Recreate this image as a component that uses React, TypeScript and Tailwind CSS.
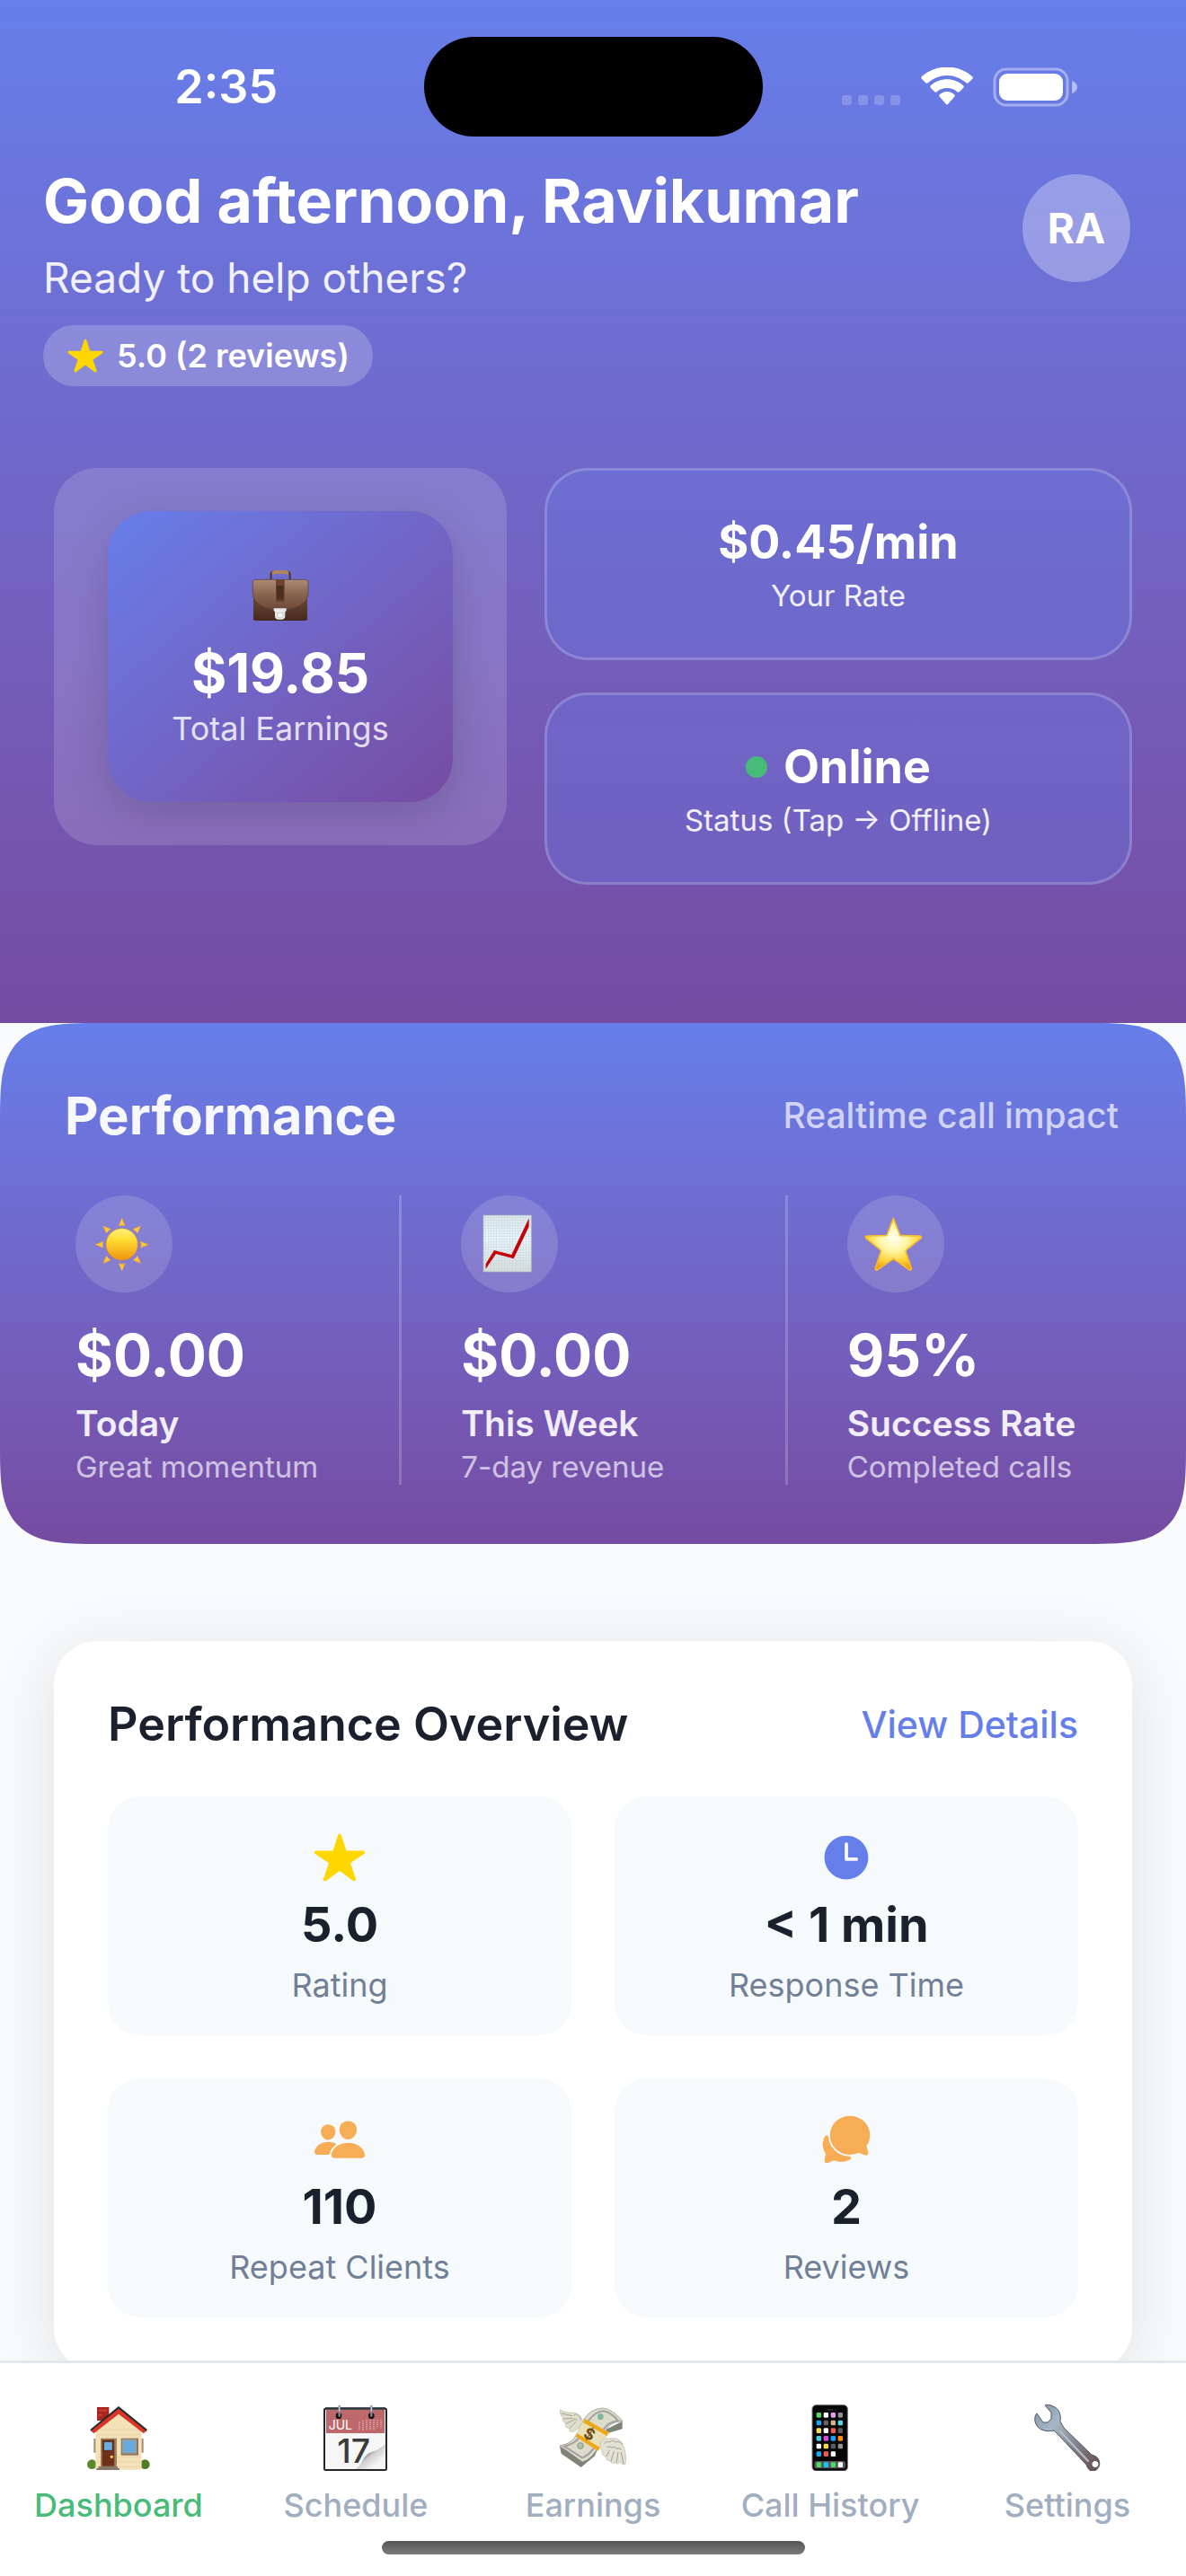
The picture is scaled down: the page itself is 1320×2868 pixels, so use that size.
import { useState } from 'react';
import { IoChatbubbles, IoPeople, IoStar, IoTime } from 'react-icons/io5';

function BriefcaseIcon() {
  return (
    <svg viewBox="110 92 204 204" className="size-[68px]" aria-hidden="true">
      <defs>
        <linearGradient id="bag-flap" x1="0" y1="0" x2="0" y2="1">
          <stop offset="0" stopColor="#a98c76" />
          <stop offset="0.45" stopColor="#8b6750" />
          <stop offset="1" stopColor="#6a4738" />
        </linearGradient>
        <linearGradient id="bag-body" x1="0" y1="0" x2="0" y2="1">
          <stop offset="0" stopColor="#7c5947" />
          <stop offset="1" stopColor="#46291f" />
        </linearGradient>
      </defs>
      <path d="M181 141v-14q-3-12 10-13h42q13 1 11 13v14" fill="none" stroke="#4d3122" strokeWidth="6" />
      <path d="M183 118q2-8 12-8h35q9 0 11 8-2 6-8 5-20-3-42 0-7 1-8-5z" fill="#b5855a" />
      <path d="M122 160h180v112q0 6-6 6H128q-6 0-6-6z" fill="url(#bag-body)" />
      <path d="M120 150q0-9 9-9h167q9 0 9 9v36c-2 38-44 57-93 57s-91-19-92-57z" fill="url(#bag-flap)" stroke="#583a2c" strokeWidth="2" />
      <path d="M197 140h29v76h-29z" fill="#6b432f" />
      <path d="M200 160h23v48h-23z" fill="#4d2f21" />
      <path d="M190 237h42v8l-4 3v17q-2 9-12 9h-10q-10 0-12-9v-17l-4-3z" fill="#e9e9e9" />
      <path d="M202 253h19v11q-2 4-5 4h-9q-4 0-5-4z" fill="#f8f8f8" stroke="#b4b4b4" strokeWidth="2" />
    </svg>
  );
}

const SUN_RAYS = [0, 45, 90, 135, 180, 225, 270, 315];

function SunIcon() {
  return (
    <svg viewBox="0 0 324 324" className="size-full" aria-hidden="true">
      <defs>
        <linearGradient id="sun-fill" x1="0" y1="0" x2="0" y2="1">
          <stop offset="0" stopColor="#fff07a" />
          <stop offset="0.35" stopColor="#ffdd33" />
          <stop offset="1" stopColor="#f09410" />
        </linearGradient>
      </defs>
      {SUN_RAYS.map((angle) => (
        <path key={angle} d="M155 76l10 25q-10-3-20 0z" fill="#ffcb35" stroke="#eca536" strokeWidth="2" transform={`rotate(${angle} 155 164)`} />
      ))}
      <circle cx="155" cy="163" r="53" fill="url(#sun-fill)" stroke="#e08a26" strokeWidth="2" />
    </svg>
  );
}

function ChartIcon() {
  return (
    <svg viewBox="0 0 324 324" className="size-full" aria-hidden="true">
      <defs>
        <linearGradient id="chart-paper" x1="0" y1="0" x2="0" y2="1">
          <stop offset="0" stopColor="#dce6ea" />
          <stop offset="0.4" stopColor="#e9f5fc" />
          <stop offset="1" stopColor="#d9dedb" />
        </linearGradient>
        <pattern id="chart-grid" width="9" height="9" patternUnits="userSpaceOnUse">
          <path d="M0 0h9M0 0v9" stroke="#bccfd8" strokeWidth="2" />
        </pattern>
      </defs>
      <path d="M75 66h160v189H75z" fill="url(#chart-paper)" />
      <path d="M75 66h160v189H75z" fill="url(#chart-grid)" stroke="#aab6b8" strokeWidth="2" />
      <path d="M83 228v17l34-50 59 16 51-107V76l-58 122-58-15z" fill="#c20006" />
    </svg>
  );
}

function GlossyStarIcon() {
  return (
    <svg viewBox="0 0 324 324" className="size-full" aria-hidden="true">
      <defs>
        <radialGradient id="star-fill" cx="0.5" cy="0.38" r="0.62">
          <stop offset="0" stopColor="#fffef0" />
          <stop offset="0.4" stopColor="#fff6a8" />
          <stop offset="0.75" stopColor="#ffd338" />
          <stop offset="1" stopColor="#f0a010" />
        </radialGradient>
      </defs>
      <path
        d="M154 76l21 55q1 3 5 3l62 1q9 1 3 8l-47 38q-4 3-2 8l18 54q1 9-7 5l-49-34q-4-3-8 0l-49 34q-8 4-7-5l18-54q2-5-2-8l-47-38q-6-7 3-8l62-1q4 0 5-3l21-55z"
        fill="url(#star-fill)"
        stroke="#f7bb2c"
        strokeWidth="5"
        strokeLinejoin="round"
      />
    </svg>
  );
}

function HouseIcon() {
  return (
    <svg viewBox="44 36 222 222" className="size-[74px]" aria-hidden="true">
      <path d="M83 45h40v45H83z" fill="#a9251f" />
      <path d="M90 52h26v8H90zM86 68h16v7H86z" fill="#c43b32" />
      <circle cx="66" cy="236" r="16" fill="#5c8b2d" />
      <circle cx="243" cy="236" r="16" fill="#4f7d26" />
      <path d="M72 150h8v47h-8zM230 150h8v47h-8z" fill="#a88c72" />
      <path d="M78 120l78-66 76 66v134H78z" fill="#f5e1b8" />
      <path d="M90 120h130M84 137h144M84 212h144M84 228h144M84 244h144" stroke="#e3cc9e" strokeWidth="2" />
      <path d="M60 120l95-78 96 78-6 8-90-74-89 74z" fill="#232b2b" />
      <path d="M64 124l91-74 91 74-7 9-84-65-83 65z" fill="#dc3429" />
      <path d="M95 149h54v97H95z" fill="#a18463" />
      <path d="M100 154h41v88h-41z" fill="#70301c" />
      <path d="M105 160h30v30h-30z" fill="#66afdc" stroke="#5a2314" strokeWidth="3" />
      <circle cx="132" cy="211" r="5" fill="#ffd34c" />
      <path d="M163 149h58v57h-58z" fill="#8b7765" />
      <path d="M168 154h45v44h-45z" fill="#68aadb" stroke="#b09a83" strokeWidth="3" />
      <path d="M88 243h64v6h6v6H81v-6h7z" fill="#85776b" />
    </svg>
  );
}

function CalendarIcon() {
  return (
    <svg viewBox="837 36 222 222" className="size-[74px]" aria-hidden="true">
      <defs>
        <linearGradient id="page-curl" x1="0" y1="0" x2="1" y2="1">
          <stop offset="0.3" stopColor="#555" />
          <stop offset="0.5" stopColor="#cfcfcf" />
          <stop offset="0.75" stopColor="#f4f4f4" />
        </linearGradient>
      </defs>
      <rect x="843" y="50" width="207" height="205" rx="4" fill="#f6f6f6" stroke="#23272b" strokeWidth="6" />
      <path d="M849 54h195v78H849z" fill="#bd686a" />
      <path d="M846 49h201" stroke="#2c3338" strokeWidth="6" />
      <text x="857" y="121" fontFamily="Inter, sans-serif" fontSize="42" fill="#fff">JUL</text>
      <path
        d="M960 94v28M972 90v32M984 88v32M996 87v34M1008 87v32M1020 87v28M1032 87v28"
        stroke="#dda9a8"
        strokeWidth="5"
        strokeDasharray="4 3"
      />
      <circle cx="891" cy="74" r="10" fill="#141414" />
      <circle cx="1000" cy="74" r="10" fill="#141414" />
      <path d="M893 42v32M1000 42v32" stroke="#7b8a98" strokeWidth="7" strokeLinecap="round" />
      <path d="M893 44v14M1000 44v14" stroke="#dbe4ec" strokeWidth="3" strokeLinecap="round" />
      <text x="886" y="231" fontFamily="Inter, sans-serif" fontSize="112" fontWeight="500" fill="#3b3b3b">17</text>
      <path d="M946 252c26-12 24-46 52-56 22-8 34-14 48-28v84z" fill="url(#page-curl)" />
    </svg>
  );
}

function MoneyIcon() {
  return (
    <svg viewBox="39 36 222 222" className="size-[74px]" aria-hidden="true">
      <path d="M39 176l5 24 66 46 46-38 30-72 62-18V92l-60 30-40 66-38 30z" fill="#7f8478" />
      <path d="M39 174c34-8 46-16 62-50 16-40 34-72 80-76 26 2 48 20 68 44-36 2-50 14-62 44-16 40-34 80-72 92z" fill="#dcdccb" stroke="#8a8a7d" strokeWidth="2" />
      <path d="M54 176c34-8 48-22 62-50 16-34 34-64 68-68 20 2 34 14 50 32-34 6-48 22-58 48-14 34-34 66-62 76z" fill="none" stroke="#a79fa2" strokeWidth="6" />
      <circle cx="175" cy="77" r="10" fill="#7eb49a" />
      <circle cx="108" cy="174" r="10" fill="#b6bca9" stroke="#8d9582" strokeWidth="3" />
      <path d="M121 85l82 44-36 62-74-54z" fill="#e9dfb8" />
      <path d="M123 84l80 46-6 11-80-45zM97 133l76 47-7 11-73-48z" fill="#eda813" />
      <text x="138" y="153" textAnchor="middle" transform="rotate(28 138 136)" fontFamily="Inter, sans-serif" fontSize="52" fontWeight="700" fill="#6a4a12">$</text>
      <path d="M116 96c-4-24-20-34-42-32-14-2-26-4-35-11 0 14 4 22 12 28-4 8 0 14 8 18-4 10 2 16 12 16-2 10 4 14 14 12 12-6 20-16 31-31z" fill="#dfddce" stroke="#b9b6a4" strokeWidth="2" />
      <path d="M44 66l36 8M52 84l30-2M60 100l26-12M72 116l20-22M86 72q10-8 16 2 8 4 6 14M84 86q8-6 12 4" fill="none" stroke="#aaa696" strokeWidth="3" />
      <path d="M176 160c10-12 20-10 30-10 22-4 38 4 44 22 10 20 10 42 8 64-10 2-14-2-18-10-4 10-10 10-16 4-6 4-14 2-16-6-10 2-14-4-14-12-10-4-14-10-14-20-6-10-8-20-4-32z" fill="#e3e1d4" stroke="#b9b6a4" strokeWidth="2" />
      <path d="M206 188l-12 22M220 192l-10 34M234 196l-6 34M244 196l8 38M188 166q8-10 18-4 8-10 20 0 12-6 22 8M196 180q8-8 16 0 10-6 16 4 8-6 18 4" fill="none" stroke="#a39f90" strokeWidth="3" />
    </svg>
  );
}

const APP_ROWS = [
  ['#4cd964', '#ffffff', '#e29cf0', '#8e8e93'],
  ['#18a9f5', '#636366', '#d5b48c', '#4fd8e8'],
  ['#fbdc45', '#ffffff', '#f7584f', '#5c5c60'],
  ['#45cfe0', '#d94be0', '#12a5ff', '#ff8f00'],
  ['#ffffff', '#fbdc45', '#5c5c60', '#8e8e93'],
  ['#18a9f5', '#f25a55', '#ffffff'],
];
const DOCK = ['#4cd964', '#18c3f5', '#4cd964', '#ffffff'];

function PhoneIcon() {
  return (
    <svg viewBox="831 36 222 222" className="size-[74px]" aria-hidden="true">
      <rect x="882" y="38" width="118" height="220" rx="13" fill="#050505" stroke="#77777b" strokeWidth="3" />
      <path d="M932 54h20M957 54h5" stroke="#303034" strokeWidth="5" />
      {APP_ROWS.map((row, r) =>
        row.map((color, c) => (
          <rect key={`${r}-${c}`} x={896 + c * 24} y={63 + r * 26} width="16" height="17" rx="4" fill={color} />
        ))
      )}
      <rect x="889" y="225" width="104" height="25" rx="8" fill="#55555a" />
      {DOCK.map((color, c) => (
        <rect key={c} x={896 + c * 24} y="229" width="16" height="17" rx="4" fill={color} />
      ))}
    </svg>
  );
}

function WrenchIcon() {
  return (
    <svg viewBox="0 0 74 74" className="size-[74px]" aria-hidden="true">
      <defs>
        <linearGradient id="wrench-steel" x1="0" y1="0" x2="1" y2="1">
          <stop offset="0" stopColor="#8093a5" />
          <stop offset="0.3" stopColor="#a5b7c8" />
          <stop offset="0.6" stopColor="#83858e" />
          <stop offset="1" stopColor="#65484a" />
        </linearGradient>
      </defs>
      <path
        fillRule="evenodd"
        d="M12 1l7 8 0 7-4 4-5 0-7-10C-1 14 0 24 8 28c5 2 9 2 14 1l6 6 30 32c2 6 5 8 9 7 5-2 7-7 5-12-1-3-4-5-8-6L33 26l-4-7c1-8-1-14-8-17-4-2-7-2-9-1zM66 63a4 4 0 1 1 0 7 4 4 0 0 1 0-7z"
        fill="url(#wrench-steel)"
        stroke="#55565f"
        strokeWidth="1"
        strokeLinejoin="round"
      />
      <path d="M29 30l31 33" stroke="#b5bfca" strokeWidth="2" strokeLinecap="round" />
    </svg>
  );
}

function StatusBar() {
  return (
    <div className="grid grid-cols-[1fr_377px_1fr] items-center pt-[41px]">
      <div className="flex justify-center pl-8 text-[52px] leading-[64px] font-semibold">2:35</div>
      <div className="h-[111px] rounded-full bg-black" />
      <div className="flex items-center justify-center pr-8">
        <svg viewBox="0 0 262 44" className="h-11 w-[262px]" fill="#fff" aria-hidden="true">
          <g fillOpacity="0.2">
            <rect x="0" y="31" width="11" height="11" rx="3" />
            <rect x="18" y="31" width="11" height="11" rx="3" />
            <rect x="36" y="31" width="11" height="11" rx="3" />
            <rect x="54" y="31" width="11" height="11" rx="3" />
          </g>
          <path d="M117 9c8 0 15 3 21 8 1 1 2 1 3 0l4-4c1-1 1-2 0-3-16-14-40-14-56 0-1 1-1 2 0 3l4 4c1 1 2 1 3 0 6-5 13-8 21-8z" />
          <path d="M117 23c4 0 8 1 11 4 1 1 2 1 3 0l4-4c1-1 1-2 0-3-10-9-26-9-36 0-1 1-1 2 0 3l4 4c1 1 2 1 3 0 3-3 7-4 11-4z" />
          <path d="M125 33c1-1 1-2 0-3-5-4-11-4-16 0-1 1-1 2 0 3l7 8c1 1 1 1 2 0z" />
          <rect x="170" y="2" width="81" height="40" rx="13" fill="none" stroke="#fff" strokeOpacity="0.4" strokeWidth="3" />
          <rect x="175" y="7" width="71" height="30" rx="9" />
          <path d="M256 15q6 2 6 7t-6 7z" fillOpacity="0.5" />
        </svg>
      </div>
    </div>
  );
}

function Header() {
  const [online, setOnline] = useState(true);

  return (
    <header className="bg-linear-to-b from-[#667eea] to-[#764ba2] pb-[154px] text-white">
      <StatusBar />

      <div className="mt-7 flex items-start justify-between pr-[62px] pl-12">
        <div>
          <h1 className="text-[68px] leading-[86px] font-bold">Good afternoon, Ravikumar</h1>
          <p className="mt-3.5 text-[46px] leading-[58px] text-white/90">Ready to help others?</p>
          <div className="mt-6 inline-flex h-[68px] items-center gap-3.5 rounded-full bg-white/20 px-[26px]">
            <IoStar className="size-[42px] text-[#ffd700]" />
            <span className="text-[36px] leading-[44px] font-semibold">5.0 (2 reviews)</span>
          </div>
        </div>
        <button className="mt-3.5 size-[120px] rounded-full bg-white/30 text-[46px] font-bold">RA</button>
      </div>

      <div className="mx-[60px] mt-[91px] grid grid-cols-[504fr_654fr] items-start gap-[42px]">
        <div className="rounded-[48px] bg-white/15 px-[60px] py-12">
          <div className="flex flex-col items-center rounded-[48px] bg-linear-to-br from-[#667eea] to-[#764ba2] py-[60px] shadow-[0_12px_48px_rgba(0,0,0,0.15)]">
            <BriefcaseIcon />
            <div className="mt-4 text-[60px] leading-[72px] font-bold">$19.85</div>
            <div className="mt-1 text-[36px] leading-[44px] text-white/80">Total Earnings</div>
          </div>
        </div>

        <div className="flex flex-col gap-9">
          <div className="flex flex-col items-center rounded-[48px] border-3 border-white/20 bg-[#667eea]/30 py-12">
            <div className="text-[52px] leading-[64px] font-bold">$0.45/min</div>
            <div className="mt-1.5 text-[33px] leading-[42px] text-white/90">Your Rate</div>
          </div>
          <button
            onClick={() => setOnline(!online)}
            className="flex flex-col items-center rounded-[48px] border-3 border-white/20 bg-[#667eea]/30 py-12"
          >
            <span className="flex items-center gap-[18px] text-[52px] leading-[64px] font-bold">
              <span className={online ? 'size-6 rounded-full bg-[#48bb78]' : 'size-6 rounded-full bg-[#a0aec0]'} />
              {online ? 'Online' : 'Offline'}
            </span>
            <span className="mt-1.5 text-[33px] leading-[42px] text-white/90">
              Status (Tap → {online ? 'Offline' : 'Online'})
            </span>
          </button>
        </div>
      </div>
    </header>
  );
}

interface MetricProps {
  icon: React.ReactNode;
  value: string;
  label: string;
  note: string;
}

function Metric({ icon, value, label, note }: MetricProps) {
  return (
    <div className="border-r-3 border-white/20 last:border-r-0">
      <div className="size-[108px] rounded-full bg-white/15">{icon}</div>
      <div className="mt-[30px] text-[64px] leading-[80px] font-bold">{value}</div>
      <div className="mt-3 text-[39px] leading-[48px] font-semibold whitespace-nowrap text-white/90">{label}</div>
      <div className="mt-1 text-[33px] leading-[40px] whitespace-nowrap text-white/65">{note}</div>
    </div>
  );
}

function PerformanceBanner() {
  return (
    <section className="rounded-[72px] bg-linear-to-b from-[#667eea] to-[#764ba2] pt-[67px] pr-[75px] pb-[66px] pl-[72px] text-white supports-[corner-shape:squircle]:rounded-[110px] supports-[corner-shape:squircle]:[corner-shape:superellipse(1.75)]">
      <div className="flex items-center justify-between">
        <h2 className="text-[58px] leading-[72px] font-bold text-white/95">Performance</h2>
        <span className="text-[39px] leading-[48px] font-medium text-white/70">Realtime call impact</span>
      </div>
      <div className="mt-[53px] mr-2 ml-3 grid grid-cols-[363fr_363fr_294fr] gap-[66px]">
        <Metric icon={<SunIcon />} value="$0.00" label="Today" note="Great momentum" />
        <Metric icon={<ChartIcon />} value="$0.00" label="This Week" note="7-day revenue" />
        <Metric icon={<GlossyStarIcon />} value="95%" label="Success Rate" note="Completed calls" />
      </div>
    </section>
  );
}

interface TileProps {
  icon: React.ReactNode;
  value: string;
  label: string;
}

function Tile({ icon, value, label }: TileProps) {
  return (
    <div className="flex flex-col items-center rounded-[36px] bg-[#f7fafc] px-9 pt-[38px] pb-[34px]">
      {icon}
      <div className="mt-3 text-[54px] leading-[66px] font-bold text-[#1a202c]">{value}</div>
      <div className="mt-3 text-[36px] leading-[44px] text-[#718096]">{label}</div>
    </div>
  );
}

function Overview() {
  return (
    <section className="mx-[60px] mt-[108px] rounded-[48px] bg-white p-[60px] shadow-[0_12px_72px_rgba(0,0,0,0.1)]">
      <div className="flex items-center justify-between">
        <h2 className="text-[52px] leading-[66px] font-semibold text-[#1a202c]">Performance Overview</h2>
        <a href="#details" className="text-[41px] leading-[50px] font-medium text-[#667eea]">View Details</a>
      </div>
      <div className="mt-[47px] grid grid-cols-2 gap-12">
        <Tile icon={<IoStar className="size-[60px] text-[#ffd700]" />} value="5.0" label="Rating" />
        <Tile icon={<IoTime className="size-[60px] text-[#667eea]" />} value="< 1 min" label="Response Time" />
        <Tile icon={<IoPeople className="size-[60px] text-[#f6ad55]" />} value="110" label="Repeat Clients" />
        <Tile icon={<IoChatbubbles className="size-[60px] text-[#f6ad55]" />} value="2" label="Reviews" />
      </div>
    </section>
  );
}

const TABS = [
  { name: 'Dashboard', href: '#dashboard', icon: <HouseIcon />, active: true },
  { name: 'Schedule', href: '#schedule', icon: <CalendarIcon /> },
  { name: 'Earnings', href: '#earnings', icon: <MoneyIcon /> },
  { name: 'Call History', href: '#history', icon: <PhoneIcon /> },
  { name: 'Settings', href: '#settings', icon: <WrenchIcon /> },
];

function TabBar() {
  return (
    <footer className="border-t-3 border-[#e2e8f0] bg-white pt-[46px] pb-6">
      <nav className="grid grid-cols-5">
        {TABS.map((tab) => (
          <a key={tab.name} href={tab.href} className="flex flex-col items-center gap-4">
            {tab.icon}
            <span
              className={
                tab.active
                  ? 'text-[36px] leading-[44px] font-medium text-[#48bb78]'
                  : 'text-[36px] leading-[44px] font-medium text-[#a0aec0]'
              }
            >
              {tab.name}
            </span>
          </a>
        ))}
      </nav>
      <div className="mx-auto mt-[18px] h-[15px] w-[471px] rounded-full bg-linear-to-b from-[#555] to-[#7c7c7c]" />
    </footer>
  );
}

export default function App() {
  return (
    <div className="flex h-screen flex-col bg-[#f8fafc] font-[Inter,sans-serif]">
      <main className="flex-1 overflow-y-auto [scrollbar-width:none]">
        <Header />
        <PerformanceBanner />
        <Overview />
      </main>
      <TabBar />
    </div>
  );
}
